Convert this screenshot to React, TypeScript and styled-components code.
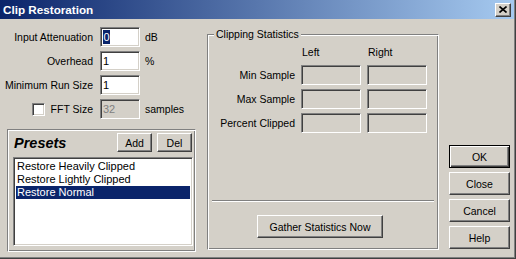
import React from "react";
import styled, { createGlobalStyle, css } from "styled-components";

const Global = createGlobalStyle`
  html, body { margin: 0; padding: 0; background: #D4D0C8; }
  body {
    font-family: "Liberation Sans", Arial, sans-serif;
    font-size: 10.5px;
    color: #000;
  }
  * { box-sizing: border-box; }
`;

const sunken = css`
  border: 1px solid;
  border-color: #808080 #ffffff #ffffff #808080;
  box-shadow: inset 1px 1px #404040, inset -1px -1px #d4d0c8;
`;

const etched = css`
  border: 1px solid;
  border-color: #808080 #ffffff #ffffff #808080;
  box-shadow: inset 1px 1px #ffffff, inset -1px -1px #808080;
`;

const Window = styled.div`
  width: 516px;
  height: 259px;
  background: #d4d0c8;
  display: flex;
  flex-direction: column;
  padding: 0 2px 2px 0;
  box-shadow: inset -1px -1px #404040, inset -2px -2px #808080;
  overflow: hidden;
`;

const TitleBar = styled.div`
  height: 19px;
  display: flex;
  align-items: center;
  padding: 0 3px 0 3px;
  background: linear-gradient(to right, #0a246a, #a6caf0);
  color: #fff;
  font-weight: bold;
  font-size: 11.7px;
`;

const TitleText = styled.span`
  flex: 1;
  white-space: nowrap;
`;

const CloseBox = styled.div`
  width: 16px;
  height: 14px;
  background: #d4d0c8;
  border: 1px solid;
  border-color: #ffffff #404040 #404040 #ffffff;
  box-shadow: inset -1px -1px #808080;
  display: flex;
  align-items: center;
  justify-content: center;
`;

const Body = styled.div`
  flex: 1;
  display: flex;
  padding: 8px 0 0 7px;
`;

const LeftColumn = styled.div`
  width: 189px;
  display: flex;
  flex-direction: column;
`;

const Form = styled.div`
  display: flex;
  flex-direction: column;
  gap: 4px;
`;

const FormRow = styled.div`
  display: flex;
  align-items: center;
  height: 20px;
`;

const FormLabel = styled.div`
  width: 86px;
  display: flex;
  justify-content: flex-end;
  align-items: center;
  white-space: nowrap;
`;

const TextBox = styled.div<{ $disabled?: boolean; $w?: number }>`
  ${sunken};
  width: ${(p) => p.$w ?? 40}px;
  height: 20px;
  margin-left: 7px;
  padding: 0 0 0 2px;
  display: flex;
  align-items: center;
  font-size: 11px;
  background: ${(p) => (p.$disabled ? "#d4d0c8" : "#ffffff")};
  color: ${(p) => (p.$disabled ? "#808080" : "#000")};
`;

const Selected = styled.span`
  background: #0a246a;
  color: #fff;
  line-height: 14px;
  padding: 0 0.5px;
`;

const Unit = styled.span`
  margin-left: 5px;
`;

const CheckBox = styled.div`
  ${sunken};
  width: 13px;
  height: 13px;
  background: #fff;
  margin-right: 6px;
`;

const PresetsBox = styled.div`
  ${etched};
  margin-top: 10px;
  width: 189px;
  height: 123px;
  padding: 3px 0 0 5px;
  display: flex;
  flex-direction: column;
`;

const PresetsHeader = styled.div`
  width: 180px;
  height: 19px;
  display: flex;
  align-items: center;
  gap: 5px;
  padding-right: 1px;
`;

const PresetsTitle = styled.span`
  flex: 1;
  margin-left: 1px;
  font-size: 14.5px;
  font-weight: bold;
  font-style: italic;
`;

const ListBox = styled.div`
  ${sunken};
  margin-top: 5px;
  width: 180px;
  height: 89px;
  background: #fff;
  padding: 2px;
  display: flex;
  flex-direction: column;
`;

const ListItem = styled.div<{ $selected?: boolean }>`
  height: 13px;
  line-height: 13px;
  padding-left: 1px;
  white-space: nowrap;
  font-size: 11px;
  background: ${(p) => (p.$selected ? "#0a246a" : "transparent")};
  color: ${(p) => (p.$selected ? "#fff" : "#000")};
`;

const Button = styled.div<{ $w: number; $h: number; $default?: boolean }>`
  width: ${(p) => p.$w}px;
  height: ${(p) => p.$h}px;
  display: flex;
  align-items: center;
  justify-content: center;
  background: #d4d0c8;
  white-space: nowrap;
  ${(p) =>
    p.$default
      ? css`
          border: 1px solid #000;
          box-shadow: inset 1px 1px #fff, inset -1px -1px #404040,
            inset -2px -2px #808080;
        `
      : css`
          border: 1px solid;
          border-color: #ffffff #404040 #404040 #ffffff;
          box-shadow: inset -1px -1px #808080;
        `}
`;

const GroupBox = styled.div`
  ${etched};
  position: relative;
  margin: 7px 0 0 11px;
  width: 232px;
  height: 216px;
  display: flex;
  flex-direction: column;
`;

const Legend = styled.span`
  position: absolute;
  top: -7px;
  left: 6px;
  padding: 0 2px;
  line-height: 13px;
  background: #d4d0c8;
  white-space: nowrap;
`;

const StatsGrid = styled.div`
  display: grid;
  grid-template-columns: 82px 60px 60px;
  grid-template-rows: 15px 20px 20px 20px;
  column-gap: 6px;
  row-gap: 4px;
  padding: 11px 0 0 5px;
`;

const ColHead = styled.div`
  padding-left: 1px;
  line-height: 13px;
`;

const StatLabel = styled.div`
  display: flex;
  align-items: center;
  justify-content: flex-end;
  white-space: nowrap;
`;

const StatBox = styled.div`
  ${sunken};
  background: #d4d0c8;
`;

const Spacer = styled.div`
  flex: 1;
`;

const Separator = styled.div`
  margin: 0 4px;
  height: 2px;
  border-top: 1px solid #808080;
  border-bottom: 1px solid #ffffff;
`;

const GroupFooter = styled.div`
  display: flex;
  padding: 13px 0 11px 49px;
`;

const RightColumn = styled.div`
  margin-left: 10px;
  padding-top: 118px;
  display: flex;
  flex-direction: column;
  gap: 4px;
`;

const stats = ["Min Sample", "Max Sample", "Percent Clipped"];
const presets = ["Restore Heavily Clipped", "Restore Lightly Clipped", "Restore Normal"];

export default function App() {
  return (
    <>
      <Global />
      <Window>
        <TitleBar>
          <TitleText>Clip Restoration</TitleText>
          <CloseBox>
            <svg width="8" height="7" viewBox="0 0 8 7">
              <path d="M0.5 0.5 L7.5 6.5 M7.5 0.5 L0.5 6.5" stroke="#000" strokeWidth="1.6" />
            </svg>
          </CloseBox>
        </TitleBar>
        <Body>
          <LeftColumn>
            <Form>
              <FormRow>
                <FormLabel>Input Attenuation</FormLabel>
                <TextBox>
                  <Selected>0</Selected>
                </TextBox>
                <Unit>dB</Unit>
              </FormRow>
              <FormRow>
                <FormLabel>Overhead</FormLabel>
                <TextBox>1</TextBox>
                <Unit>%</Unit>
              </FormRow>
              <FormRow>
                <FormLabel>Minimum Run Size</FormLabel>
                <TextBox>1</TextBox>
              </FormRow>
              <FormRow>
                <FormLabel>
                  <CheckBox />
                  FFT Size
                </FormLabel>
                <TextBox $disabled>32</TextBox>
                <Unit>samples</Unit>
              </FormRow>
            </Form>
            <PresetsBox>
              <PresetsHeader>
                <PresetsTitle>Presets</PresetsTitle>
                <Button $w={35} $h={19}>Add</Button>
                <Button $w={35} $h={19}>Del</Button>
              </PresetsHeader>
              <ListBox>
                {presets.map((p, i) => (
                  <ListItem key={p} $selected={i === 2}>
                    {p}
                  </ListItem>
                ))}
              </ListBox>
            </PresetsBox>
          </LeftColumn>
          <GroupBox>
            <Legend>Clipping Statistics</Legend>
            <StatsGrid>
              <div />
              <ColHead>Left</ColHead>
              <ColHead>Right</ColHead>
              {stats.map((s) => (
                <React.Fragment key={s}>
                  <StatLabel>{s}</StatLabel>
                  <StatBox />
                  <StatBox />
                </React.Fragment>
              ))}
            </StatsGrid>
            <Spacer />
            <Separator />
            <GroupFooter>
              <Button $w={126} $h={23}>Gather Statistics Now</Button>
            </GroupFooter>
          </GroupBox>
          <RightColumn>
            <Button $w={61} $h={23} $default>OK</Button>
            <Button $w={61} $h={23}>Close</Button>
            <Button $w={61} $h={23}>Cancel</Button>
            <Button $w={61} $h={23}>Help</Button>
          </RightColumn>
        </Body>
      </Window>
    </>
  );
}
